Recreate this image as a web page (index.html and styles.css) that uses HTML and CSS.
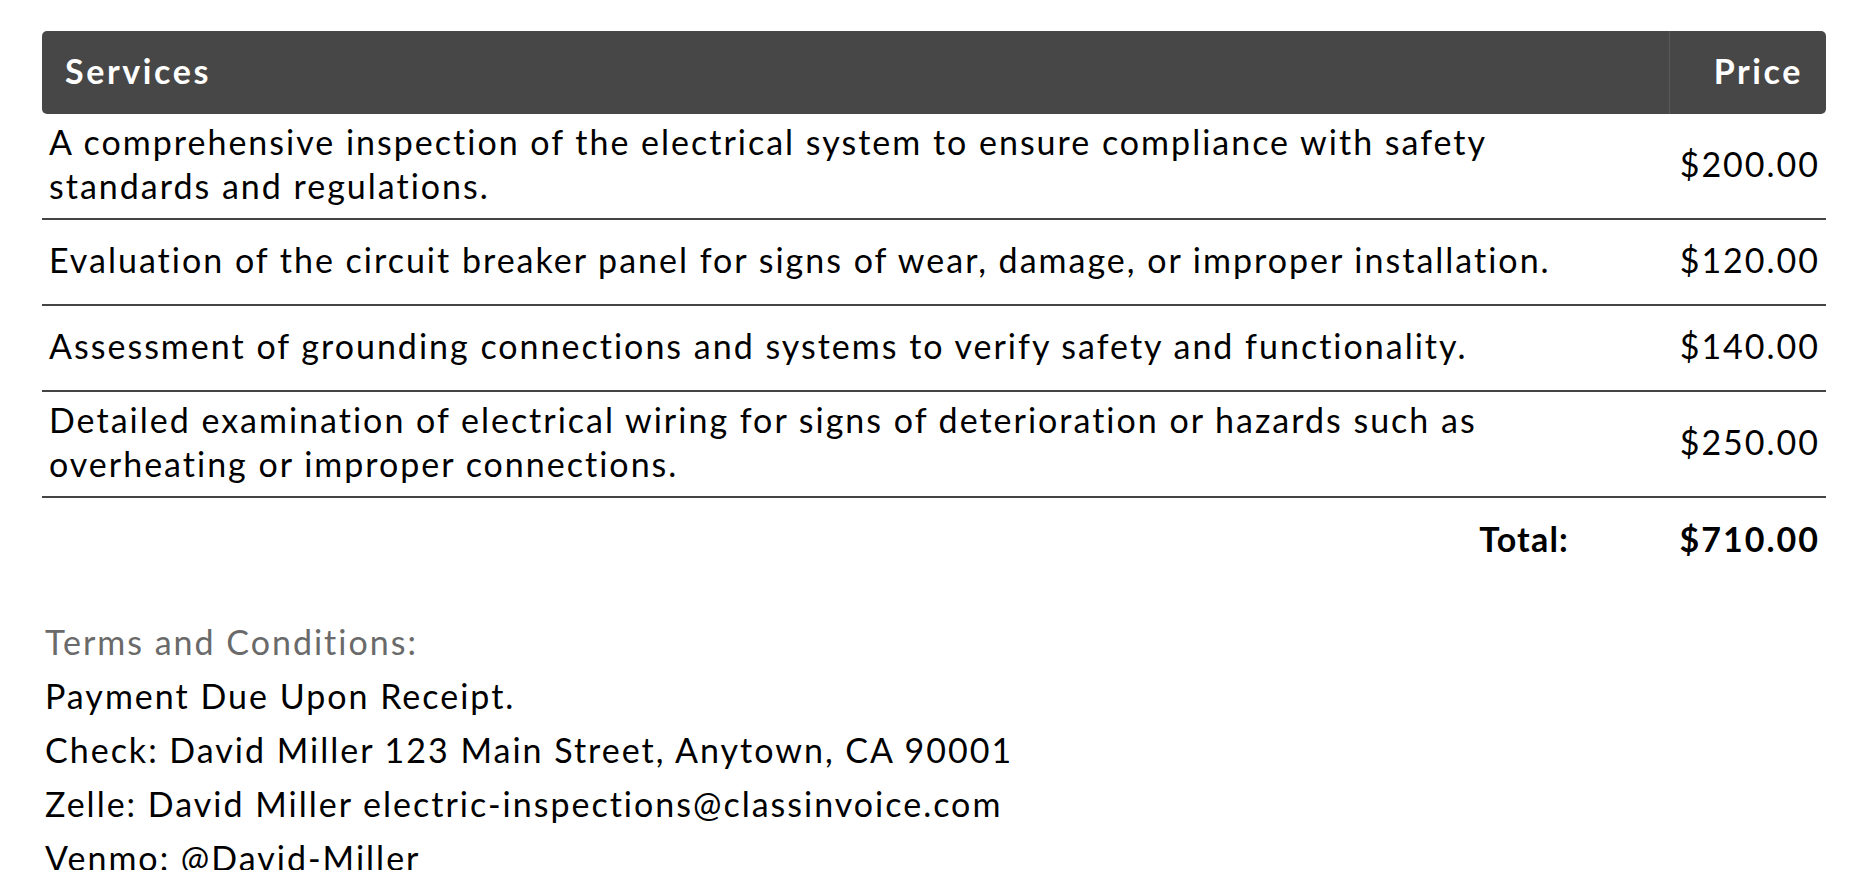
FILE: index.html
```html
<!DOCTYPE html>
<html lang="en">
<head>
<meta charset="utf-8">
<title>Invoice services</title>
<link rel="stylesheet" href="styles.css">
</head>
<body>
<div class="page">
  <table class="items">
    <thead>
      <tr>
        <th class="col-desc">Services</th>
        <th class="col-price">Price</th>
      </tr>
    </thead>
    <tbody>
      <tr>
        <td class="desc">A comprehensive inspection of the electrical system to ensure compliance with safety standards and regulations.</td>
        <td class="price">$200.00</td>
      </tr>
      <tr>
        <td class="desc">Evaluation of the circuit breaker panel for signs of wear, damage, or improper installation.</td>
        <td class="price">$120.00</td>
      </tr>
      <tr>
        <td class="desc">Assessment of grounding connections and systems to verify safety and functionality.</td>
        <td class="price">$140.00</td>
      </tr>
      <tr>
        <td class="desc">Detailed examination of electrical wiring for signs of deterioration or hazards such as overheating or improper connections.</td>
        <td class="price">$250.00</td>
      </tr>
    </tbody>
    <tfoot>
      <tr>
        <td class="total-label">Total:</td>
        <td class="total-value">$710.00</td>
      </tr>
    </tfoot>
  </table>

  <div class="terms">
    <p class="terms-title">Terms and Conditions:</p>
    <p>Payment Due Upon Receipt.</p>
    <p>Check: David Miller 123 Main Street, Anytown, CA 90001</p>
    <p>Zelle: David Miller electric-inspections@classinvoice.com</p>
    <p>Venmo: @David-Miller</p>
  </div>
</div>
</body>
</html>
```
FILE: styles.css
```css
html, body {
  margin: 0;
  padding: 0;
  background: #ffffff;
}

body {
  font-family: Lato, "Open Sans", "Liberation Sans", sans-serif;
  color: #000000;
  font-size: 34px;
  line-height: 44px;
  letter-spacing: 2px;
}

.page {
  padding: 31px 42px 0 42px;
}

.items {
  width: 100%;
  border-collapse: separate;
  border-spacing: 0;
}

.items th {
  background: #474747;
  color: #ffffff;
  font-weight: 700;
  letter-spacing: 2.6px;
  padding: 18px 0 21px 0;
  line-height: 44px;
}

.items th.col-desc {
  text-align: left;
  padding-left: 23px;
  border-radius: 5px 0 0 5px;
}

.items th.col-price {
  width: 133px;
  text-align: right;
  padding-right: 23px;
  border-left: 1px solid #5a5a5a;
  border-radius: 0 5px 5px 0;
}

.items tbody td {
  border-bottom: 2px solid #444444;
  vertical-align: middle;
}

.items td.desc {
  padding: 6px 60px 10px 7px;
}

.items td.price {
  text-align: right;
  padding: 18px 6px 22px 0;
  white-space: nowrap;
}

.items tfoot td {
  font-weight: 700;
  padding: 19px 6px 21px 0;
  text-align: right;
}

.items td.total-label {
  padding-right: 100px;
  letter-spacing: 1.2px;
}

.terms {
  margin-top: 33px;
  padding-left: 3px;
}

.terms p {
  margin: 0;
  line-height: 54px;
}

.terms .terms-title {
  color: #6a6a6a;
}
```
